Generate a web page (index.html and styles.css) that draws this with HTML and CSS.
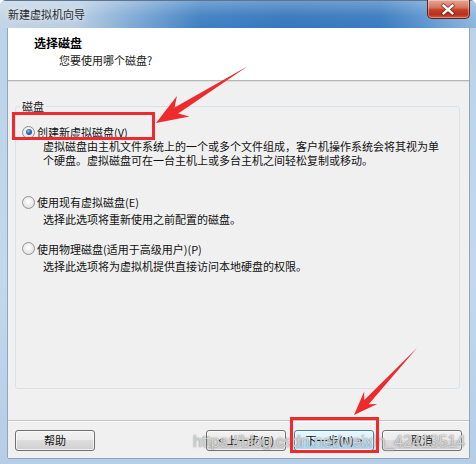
FILE: index.html
```html
<!DOCTYPE html>
<html lang="zh-CN">
<head>
<meta charset="utf-8">
<title>新建虚拟机向导</title>
<link rel="stylesheet" href="styles.css">
</head>
<body>
<div class="window">
  <div class="titlebar">
    <span class="title">新建虚拟机向导</span>
    <span class="close">
      <svg width="43" height="19" viewBox="0 0 43 19">
        <path d="M17 5.5 L26 13.5 M26 5.5 L17 13.5" stroke="#4a1a12" stroke-width="4.2" stroke-linecap="square" fill="none" opacity="0.55"/>
        <path d="M17 5.5 L26 13.5 M26 5.5 L17 13.5" stroke="#ffffff" stroke-width="2.4" stroke-linecap="square" fill="none"/>
      </svg>
    </span>
  </div>
  <div class="frame">
    <div class="client">
      <div class="header">
        <div class="h-title">选择磁盘</div>
        <div class="h-sub">您要使用哪个磁盘?</div>
      </div>
      <div class="main">
        <fieldset class="group">
          <legend class="group-label">磁盘</legend>
          <div class="option opt1">
            <div class="opt-row"><span class="radio checked"></span><span>创建新虚拟磁盘(V)</span></div>
            <div class="opt-desc">虚拟磁盘由主机文件系统上的一个或多个文件组成，客户机操作系统会将其视为单<br>个硬盘。虚拟磁盘可在一台主机上或多台主机之间轻松复制或移动。</div>
          </div>
          <div class="option opt2">
            <div class="opt-row"><span class="radio"></span><span>使用现有虚拟磁盘(E)</span></div>
            <div class="opt-desc">选择此选项将重新使用之前配置的磁盘。</div>
          </div>
          <div class="option opt3">
            <div class="opt-row"><span class="radio"></span><span>使用物理磁盘(适用于高级用户)(P)</span></div>
            <div class="opt-desc">选择此选项将为虚拟机提供直接访问本地硬盘的权限。</div>
          </div>
        </fieldset>
      </div>
      <div class="footer">
        <button class="btn">帮助</button>
        <span class="spacer"></span>
        <button class="btn">&lt; 上一步(B)</button>
        <button class="btn default">下一步(N) &gt;</button>
        <button class="btn">取消</button>
      </div>
    </div>
  </div>
  <div class="watermark">https://blog.csdn.net/weixin_42413514</div>
  <svg class="annot" width="476" height="464" viewBox="0 0 476 464">
    <rect x="13.5" y="113.5" width="140" height="25" fill="none" stroke="#ee2a2c" stroke-width="3"/>
    <rect x="291.5" y="418.5" width="86" height="33" fill="none" stroke="#ee2a2c" stroke-width="3"/>
    <polygon points="248,66 178.2,113.4 189.5,116.4 156,123 176.9,96 174.6,107.4" fill="#ee2a2c"/>
    <polygon points="417,348 368.7,404.2 377.2,404.1 354,415 364.2,391.5 364.3,400" fill="#ee2a2c"/>
  </svg>
</div>
</body>
</html>
```

FILE: styles.css
```css
html, body {
  margin: 0;
  padding: 0;
  width: 476px;
  height: 464px;
  overflow: hidden;
  background: #ffffff;
}

.window {
  position: relative;
  width: 476px;
  height: 464px;
  display: flex;
  flex-direction: column;
  background: linear-gradient(to bottom, #bcd2e8 0%, #c3d8ec 60%, #b5cde6 100%);
  border-radius: 6px 6px 0 0;
  box-sizing: border-box;
  font-family: "Noto Sans CJK SC", "Noto Sans", sans-serif;
  font-size: 11px;
  color: #111;
  overflow: hidden;
}

.titlebar {
  height: 28px;
  flex: none;
  display: flex;
  align-items: flex-start;
  position: relative;
  background:
    linear-gradient(to bottom, rgba(255,255,255,0.28) 0%, rgba(255,255,255,0.05) 55%, rgba(255,255,255,0) 100%),
    linear-gradient(to right, #c3d4e5 0%, #b8cde2 16%, #7ea9d4 28%, #3f80c3 42%, #3676bb 60%, #3a7bbf 80%, #5e97d0 90%, #8db7de 100%);
  border-top: 1px solid #5d7590;
  box-sizing: border-box;
}

.title {
  margin: 6px 0 0 8px;
  line-height: 14px;
  color: #2a2a2a;
  text-shadow: 0 0 6px rgba(255,255,255,0.9);
}

.close {
  margin-left: auto;
  margin-right: 6px;
  margin-top: -1px;
  width: 43px;
  height: 19px;
  border: 1px solid #5c2219;
  border-top: none;
  border-radius: 0 0 5px 5px;
  box-sizing: border-box;
  background: linear-gradient(to bottom, #e7a595 0%, #d9785f 40%, #c2412a 55%, #b7301b 80%, #d1593c 100%);
  box-shadow: inset 0 0 0 1px rgba(255,255,255,0.35);
  display: flex;
}

.close svg {
  margin-left: -1px;
}

.frame {
  flex: 1;
  display: flex;
  padding: 0 7px 6px 8px;
  min-height: 0;
}

.client {
  flex: 1;
  display: flex;
  flex-direction: column;
  background: #f0f0f0;
  box-shadow: 1px 0 0 #8ea6bf, -1px 0 0 #8ea6bf, 0 1px 0 #8ea6bf;
}

.header {
  height: 52px;
  flex: none;
  background: #ffffff;
  border-bottom: 1px solid #b6b6b6;
  box-shadow: 0 1px 0 #dedede;
  box-sizing: content-box;
  padding-left: 26px;
}

.h-title {
  margin-top: 7px;
  font-weight: bold;
  font-size: 12px;
  line-height: 16px;
  color: #000;
}

.h-sub {
  margin-top: 2px;
  margin-left: 25px;
  line-height: 14px;
  color: #1a1a1a;
}

.main {
  flex: 1;
  padding: 16px 9px 0 7px;
  margin-top: 1px;
  min-height: 0;
}

.group {
  margin: 0;
  padding: 0 0 0 6px;
  height: 291px;
  box-sizing: border-box;
  border: 1px solid #d9e0e6;
  border-radius: 3px;
}

.group-label {
  padding: 0 2px;
  margin-left: -2px;
  line-height: 16px;
  color: #1a1a1a;
}

.option {
  display: flex;
  flex-direction: column;
}

.opt1 { margin-top: 11px; }
.opt2 { margin-top: 28px; }
.opt3 { margin-top: 15px; }

.opt-row {
  display: flex;
  align-items: center;
  gap: 2px;
  line-height: 14px;
  color: #111;
}

.opt-desc {
  padding-left: 21px;
  line-height: 13.5px;
  color: #111;
}

.opt1 .opt-desc { margin-top: 1px; }
.opt2 .opt-desc, .opt3 .opt-desc { margin-top: 4px; }

.radio {
  width: 13px;
  height: 13px;
  border-radius: 50%;
  box-sizing: border-box;
  border: 1px solid #8f9396;
  background: radial-gradient(circle at 50% 40%, #ffffff 0%, #eeeeee 45%, #d6d6d6 100%);
  position: relative;
  flex: none;
}

.radio.checked::after {
  content: "";
  position: absolute;
  left: 2.5px;
  top: 2.5px;
  width: 6px;
  height: 6px;
  border-radius: 50%;
  background: radial-gradient(circle at 40% 35%, #7fc4ea 0%, #2d6fb1 45%, #123f78 100%);
}

.footer {
  height: 38px;
  flex: none;
  box-sizing: border-box;
  border-top: 1px solid #c3c3c3;
  box-shadow: inset 0 1px 0 #fbfbfb;
  padding: 9px 7px 0 7px;
  display: flex;
  align-items: flex-start;
  gap: 8px;
}

.spacer {
  flex: 1;
}

.btn {
  width: 80px;
  height: 21px;
  padding: 0;
  margin: 0;
  font-family: "Noto Sans CJK SC", "Noto Sans", sans-serif;
  font-size: 11px;
  line-height: 19px;
  color: #111;
  border: 1px solid #707070;
  border-radius: 3px;
  background: linear-gradient(to bottom, #f2f2f2 0%, #ebebeb 50%, #dddddd 50%, #cfcfcf 100%);
  box-shadow: inset 0 0 0 1px rgba(255,255,255,0.7);
}

.btn.default {
  border-color: #3c7fb1;
  background: linear-gradient(to bottom, #eaf6fd 0%, #d9f0fc 50%, #bee6fd 50%, #a7d9f5 100%);
  box-shadow: inset 0 0 0 1px rgba(255,255,255,0.8);
}

.watermark {
  position: absolute;
  left: 193px;
  top: 432px;
  font-family: "Liberation Sans", Arial, sans-serif;
  font-size: 16px;
  line-height: 20px;
  color: rgba(255,255,255,0.7);
  text-shadow: 0 0 1px rgba(90,90,90,0.8), 0 0 2px rgba(120,120,120,0.5);
  white-space: nowrap;
  pointer-events: none;
}

.annot {
  position: absolute;
  left: 0;
  top: 0;
  pointer-events: none;
}
```
